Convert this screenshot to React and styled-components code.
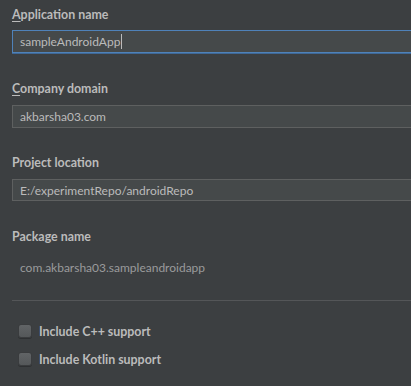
import React from 'react'
import styled, { createGlobalStyle } from 'styled-components'

const GlobalStyle = createGlobalStyle`
  html, body {
    margin: 0;
    padding: 0;
    background: #3c3f41;
    overflow: hidden;
  }
  body {
    font-family: "Lato", "Open Sans", sans-serif;
    color: #bbbbbb;
  }
`

const Page = styled.div`
  width: 411px;
  height: 386px;
  padding: 6px 0 0 12px;
  box-sizing: border-box;
  overflow: hidden;
`

const Label = styled.div`
  font-size: 12.4px;
  font-weight: 700;
  line-height: 18px;
  height: 16px;
  color: #bbbbbb;
  margin-top: ${p => p.$top || 0}px;
  u {
    text-decoration: underline;
    text-underline-offset: 2px;
  }
`

const Field = styled.div`
  display: flex;
  align-items: center;
  height: ${p => p.$h || 23}px;
  margin-top: ${p => p.$top || 8}px;
  margin-right: -20px;
  padding-left: 7px;
  box-sizing: border-box;
  background: #45494a;
  border: 1px solid ${p => (p.$focused ? '#4f82b9' : '#5e6060')};
  box-shadow: ${p => (p.$focused ? '0 1px 0 #3f6896' : 'none')};
  font-size: 12px;
  color: #bbbbbb;
  white-space: nowrap;
`

const Caret = styled.span`
  display: inline-block;
  width: 1px;
  height: 15px;
  margin-left: 1px;
  background: #bbbbbb;
`

const PackageText = styled.div`
  margin-top: 16px;
  padding-left: 8px;
  font-size: 12px;
  line-height: 16px;
  color: #9a9b9c;
`

const Separator = styled.hr`
  margin: 24px 0 0 0;
  border: none;
  border-top: 1px solid #545658;
  height: 0;
`

const CheckRow = styled.label`
  display: flex;
  align-items: center;
  gap: 7px;
  margin-top: ${p => p.$top}px;
  padding-left: 6px;
  height: 14px;
  font-size: 12.4px;
  font-weight: 700;
  color: #bbbbbb;
`

const Box = styled.span`
  width: 12px;
  height: 12px;
  border-radius: 3px;
  border: 1px solid #3a3c3e;
  background: linear-gradient(#616466, #55585a);
  box-shadow: 0 1px 0 #2e3032;
`

export default function App() {
  return (
    <>
      <GlobalStyle />
      <Page>
        <Label>
          <u>A</u>pplication name
        </Label>
        <Field $focused>
          sampleAndroidApp
          <Caret />
        </Field>

        <Label $top={27}>
          <u>C</u>ompany domain
        </Label>
        <Field $top={9}>akbarsha03.com</Field>

        <Label $top={26}>Project location</Label>
        <Field $top={9} $h={22}>E:/experimentRepo/androidRepo</Field>

        <Label $top={27}>Package name</Label>
        <PackageText>com.akbarsha03.sampleandroidapp</PackageText>

        <Separator />

        <CheckRow $top={23}>
          <Box />
          Include C++ support
        </CheckRow>
        <CheckRow $top={14}>
          <Box />
          Include Kotlin support
        </CheckRow>
      </Page>
    </>
  )
}
